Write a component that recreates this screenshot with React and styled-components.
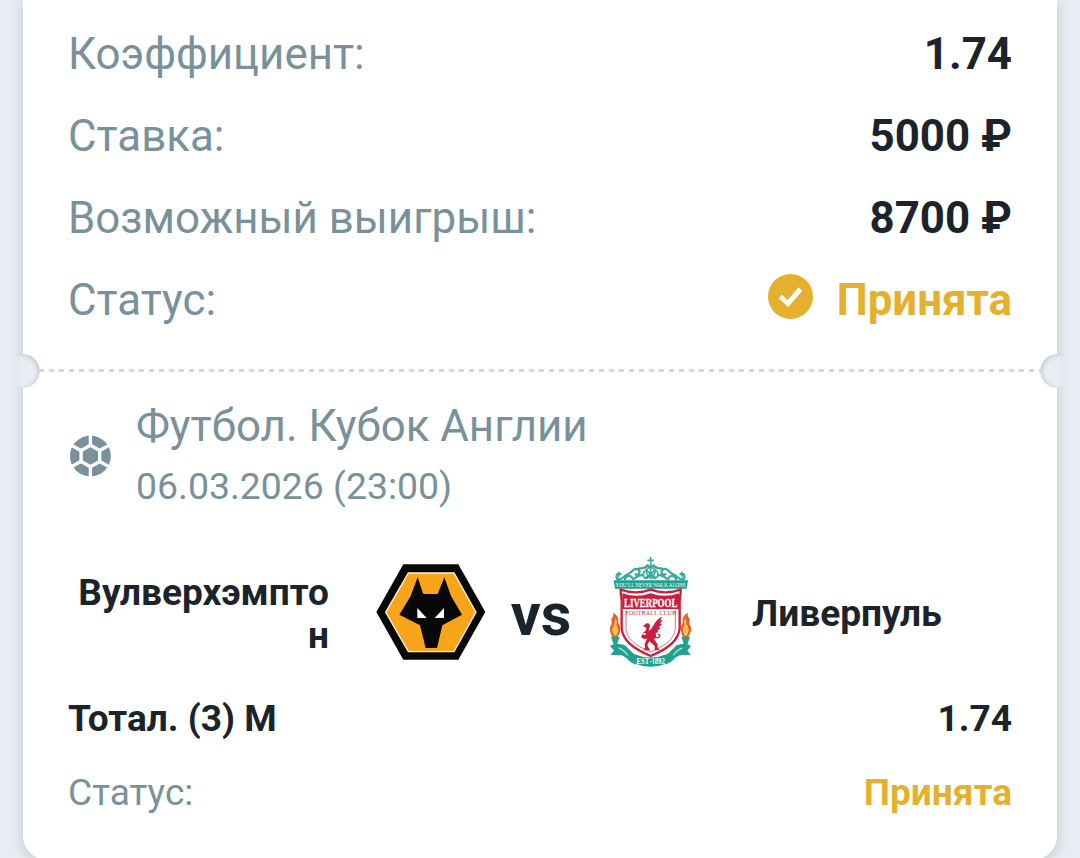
import React from 'react';
import styled, { createGlobalStyle } from 'styled-components';

const Global = createGlobalStyle`
  * { box-sizing: border-box; }
  body {
    margin: 0;
    background: #e9edf3;
    font-family: Roboto, "Noto Sans", sans-serif;
    color: #1c242b;
    overflow: hidden;
  }
`;

const Page = styled.main`
  height: 858px;
  padding: 0 23px;
`;

const Ticket = styled.article`
  height: 860px;
  padding-top: 12px;
  background: #fff;
  border-radius: 0 0 24px 24px;
  box-shadow: 0 2px 12px rgba(60, 70, 80, 0.25);
`;

const Summary = styled.section`
  padding: 0 45px;
`;

const Row = styled.div`
  display: flex;
  align-items: center;
  justify-content: space-between;
  height: ${(p) => p.$height}px;
  padding-top: ${(p) => p.$drop || 0}px;
  font-size: ${(p) => p.$size}px;
  white-space: nowrap;
`;

const Label = styled.span`
  color: #78919a;
`;

const Value = styled.span`
  display: flex;
  align-items: center;
  gap: 24px;
  font-weight: 700;
  color: ${(p) => (p.$accepted ? '#e5b02e' : 'inherit')};
`;

const StatusIcon = styled.svg`
  width: 45px;
  height: 45px;
  margin-top: -7px;
`;

const Perforation = styled.div`
  display: flex;
  align-items: center;
  height: 34px;
  margin-top: 14px;
`;

const Notch = styled.div`
  flex: none;
  width: 40px;
  height: 34px;
  overflow: hidden;
  margin-left: ${(p) => (p.$right ? 0 : -23)}px;
  margin-right: ${(p) => (p.$right ? -23 : 0)}px;

  &::before {
    content: '';
    display: block;
    width: 57px;
    height: 34px;
    margin-left: ${(p) => (p.$right ? 0 : -17)}px;
    border-radius: 17px;
    background: #e9edf3;
    box-shadow: inset ${(p) => (p.$right ? 2 : -2)}px 1px 4px rgba(60, 70, 80, 0.22);
    mask-image: linear-gradient(to ${(p) => (p.$right ? 'left' : 'right')}, transparent 28px, #000 39px);
  }
`;

const Dashes = styled.div`
  flex: 1;
  height: 3px;
  margin-top: -1px;
  background: repeating-linear-gradient(to right, #d5d8d8 0 5px, transparent 5px 10px);
  background-position: -1px 0;
`;

const Event = styled.section`
  padding: 8px 45px 0;
`;

const EventHead = styled.header`
  display: flex;
  align-items: center;
  gap: 25px;
  height: 120px;
  padding-left: 1px;
  color: #78919a;
`;

const BallIcon = styled.svg`
  width: 42px;
  height: 42px;
`;

const Title = styled.div`
  font-size: 43.85px;
  line-height: 60px;
`;

const DateLine = styled.div`
  font-size: 37.4px;
  line-height: 60px;
`;

const Teams = styled.div`
  display: grid;
  grid-template-columns: 260px 330px 1fr;
  column-gap: 47px;
  align-items: center;
  height: 110px;
  margin: 41px 0 0 1px;
`;

const Team = styled.div`
  padding-top: 3px;
  margin-left: ${(p) => (p.$align === 'left' ? -1 : 0)}px;
  font-size: 37.1px;
  font-weight: 700;
  line-height: 43px;
  text-align: ${(p) => p.$align};
  overflow-wrap: anywhere;
`;

const Crests = styled.div`
  display: flex;
  align-items: center;
  justify-content: space-between;
`;

const Crest = styled.svg`
  width: 110px;
  height: 110px;
  overflow: visible;
`;

const Versus = styled.span`
  padding-top: 6px;
  font-size: 59.5px;
  font-weight: 700;
  line-height: 64px;
`;

const Bets = styled.div`
  margin-top: 14px;
`;

const Check = () => (
  <StatusIcon viewBox="0 0 45 45">
    <circle cx="22.5" cy="22.5" r="22.5" fill="#e5b02e" />
    <path d="M12.3 22.5 L20 29.5 L32.5 15" fill="none" stroke="#fff" strokeWidth="5" />
  </StatusIcon>
);

const Ball = () => (
  <BallIcon viewBox="0 0 42 42">
    <circle cx="21.4" cy="21" r="20.4" fill="#78919a" />
    <g fill="none" stroke="#fff" strokeWidth="3.4">
      <path d="M21.4 10.2 L30.7 15.6 V26.4 L21.4 31.8 L12.1 26.4 V15.6 Z" />
      <path d="M21.4 11V-1M30.4 15.8L41 9.6M30.4 26.2L41 32.4M21.4 31V43M12.4 26.2L1 32.6M12.4 15.8L1 9.4" />
    </g>
  </BallIcon>
);

const WolvesCrest = () => (
  <Crest viewBox="33 21 330 330">
    <path d="M115 43H280L361 186L280 329H115L34 186Z" fill="#080808" />
    <path d="M130 69H267L333 187L267 305H130L62 187Z" fill="#f9a51c" stroke="#fff3d3" strokeWidth="4" />
    <path d="M158 82L175 132H218L238 82L258 138L291 194L232 226L216 294H182L165 226L103 194L137 138Z" fill="#080808" />
    <path d="M157 174L185 204H157ZM237 174L209 204H237Z" fill="#fff" />
  </Crest>
);

const Flame = () => (
  <g>
    <path d="M57 280C43 262 43 247 51 237L50 222C57 213 57 208 54 203C68 209 73 220 70 232C81 246 77 269 66 280Z" fill="#e2642c" />
    <path d="M60 272C48 258 53 247 60 237C58 228 63 224 61 219C69 227 67 234 65 239C74 253 70 264 64 272Z" fill="#f7c04b" />
    <path d="M49 275H75L67 299H57Z" fill="#20a390" />
  </g>
);

const LiverpoolCrest = () => (
  <Crest viewBox="4 36 330 330">
    <g fill="none" stroke="#3aab9b" strokeLinecap="round">
      <path d="M69 104C62 92 67 86 76 87M72 102C86 104 87 91 99 88C111 85 113 70 126 72C140 75 135 93 123 88M91 103C90 92 108 89 113 99M115 102C128 98 131 87 145 91M134 70C145 72 151 68 159 61" strokeWidth="7" />
      <path d="M266 104C273 92 268 86 259 87M263 102C249 104 248 91 236 88C224 85 222 70 209 72C195 75 200 93 212 88M244 103C245 92 227 89 222 99M220 102C207 98 204 87 190 91M201 70C190 72 184 68 176 61" strokeWidth="7" />
      <path d="M168 38V65M160 46H176M73 82V94M67 87H79M262 82V94M256 87H268" strokeWidth="5" />
      <path d="M151 68C164 60 173 60 184 68M149 79C137 102 164 107 167 88C171 107 198 101 187 78M168 66V101M153 75L183 98M183 75L153 98" strokeWidth="5" />
      <circle cx="168" cy="80" r="13" strokeWidth="5" />
    </g>
    <path d="M57 106H280L276 131H61Z" fill="#20a18f" />
    <text x="168" y="125" textAnchor="middle" textLength="211" lengthAdjust="spacingAndGlyphs" fill="#fff" fontFamily="Liberation Serif, serif" fontSize="21">YOU’LL NEVER WALK ALONE</text>
    <path d="M78 134Q123 150 168 134Q213 150 258 134C259 151 253 162 255 178V252C250 285 225 309 168 333C111 309 86 285 81 252V178C83 162 77 151 78 134Z" fill="#fff" stroke="#c91f3c" strokeWidth="7" />
    <path d="M83 145Q127 160 168 145Q209 160 253 145V192H83Z" fill="#c91f3c" />
    <path d="M94 196V251C97 279 117 299 168 321C219 299 239 279 242 251V196" fill="none" stroke="#dc7080" strokeWidth="3" />
    <text x="168" y="187" textAnchor="middle" textLength="160" lengthAdjust="spacingAndGlyphs" fill="#fff" stroke="#fff" strokeWidth="0.8" fontFamily="Liberation Serif, serif" fontWeight="700" fontSize="35">LIVERPOOL</text>
    <text x="168" y="211" textAnchor="middle" textLength="153" lengthAdjust="spacingAndGlyphs" fill="#c93850" fontFamily="Liberation Serif, serif" fontSize="20">FOOTBALL CLUB</text>
    <path d="M145 244L153 236C161 232 169 238 165 247L162 257C178 250 176 226 202 215L197 226L203 226L196 236L202 238L192 247L198 250L188 257L192 261L182 265C187 272 184 279 178 283L189 298V309L197 316H180L180 303L164 289L158 300L162 309L168 316H146L151 309L150 297L157 281L147 282L139 276L144 267L151 271L155 264L143 265L153 257L155 248Z" fill="#cb203d" />
    <path d="M182 277C200 281 197 265 190 269" fill="none" stroke="#cb203d" strokeWidth="4" />
    <Flame />
    <g transform="translate(335 0) scale(-1 1)"><Flame /></g>
    <path d="M46 302Q67 291 91 301L120 329L124 359C99 351 92 327 73 331L47 329L58 317ZM289 302Q269 291 246 301L216 329L212 359C237 351 244 327 263 331L289 329L278 317Z" fill="#20a18f" />
    <path d="M72 309Q89 315 99 331M263 309Q246 315 236 331" fill="none" stroke="#a3dbd2" strokeWidth="4" />
    <path d="M118 327Q168 348 218 327L213 356Q168 375 123 356Z" fill="#20a18f" />
    <text x="168" y="358" textAnchor="middle" textLength="85" lengthAdjust="spacingAndGlyphs" fill="#fff" fontFamily="Liberation Serif, serif" fontWeight="700" fontSize="22">EST·1892</text>
  </Crest>
);

export default function App() {
  return (
    <Page>
      <Global />
      <Ticket>
        <Summary>
          <Row $height={82} $size={43.85} $drop={1}>
            <Label>Коэффициент:</Label>
            <Value>1.74</Value>
          </Row>
          <Row $height={82} $size={43.85} $drop={1}>
            <Label>Ставка:</Label>
            <Value>5000 ₽</Value>
          </Row>
          <Row $height={82} $size={43.85} $drop={1}>
            <Label>Возможный выигрыш:</Label>
            <Value>8700 ₽</Value>
          </Row>
          <Row $height={82} $size={43.85} $drop={1}>
            <Label>Статус:</Label>
            <Value $accepted><Check />Принята</Value>
          </Row>
        </Summary>
        <Perforation>
          <Notch />
          <Dashes />
          <Notch $right />
        </Perforation>
        <Event>
          <EventHead>
            <Ball />
            <div>
              <Title>Футбол. Кубок Англии</Title>
              <DateLine>06.03.2026 (23:00)</DateLine>
            </div>
          </EventHead>
          <Teams>
            <Team $align="right">Вулверхэмптон</Team>
            <Crests>
              <WolvesCrest />
              <Versus>vs</Versus>
              <LiverpoolCrest />
            </Crests>
            <Team $align="left">Ливерпуль</Team>
          </Teams>
          <Bets>
            <Row $height={74} $size={37.1}>
              <Value>Тотал. (3) М</Value>
              <Value>1.74</Value>
            </Row>
            <Row $height={74} $size={37.1}>
              <Label>Статус:</Label>
              <Value $accepted>Принята</Value>
            </Row>
          </Bets>
        </Event>
      </Ticket>
    </Page>
  );
}
